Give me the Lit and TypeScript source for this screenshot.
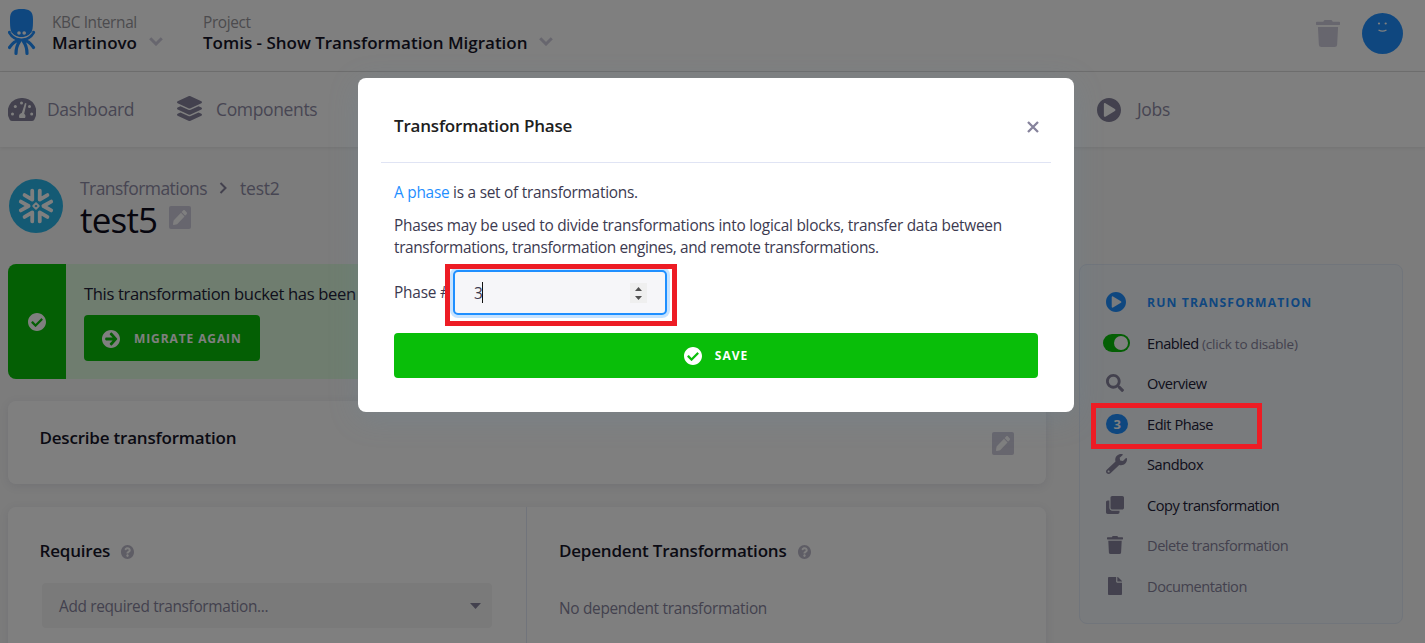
import { LitElement, html, svg, css } from "lit";
import { customElement, property, state } from "lit/decorators.js";

const CIRCLE = "M504 256c0 137-111 248-248 248S8 393 8 256 119 8 256 8s248 111 248 248z";

const ICONS: Record<string, { box: string; d: string }> = {
  check: {
    box: "8 8 496 496",
    d: "M504 256c0 136.967-111.033 248-248 248S8 392.967 8 256 119.033 8 256 8s248 111.033 248 248zM227.314 387.314l184-184c6.248-6.248 6.248-16.379 0-22.627l-22.627-22.627c-6.248-6.249-16.379-6.249-22.628 0L216 308.118l-70.059-70.059c-6.248-6.248-16.379-6.248-22.628 0l-22.627 22.627c-6.248 6.248-6.248 16.379 0 22.627l104 104c6.249 6.249 16.379 6.249 22.628.001z",
  },
  play: {
    box: "8 8 496 496",
    d: CIRCLE + "M150 136v240c0 18 16 27 32 19l196-118c16-9 16-32 0-42L182 117c-16-9-32 1-32 19z",
  },
  arrow: {
    box: "8 8 496 496",
    d: CIRCLE + "M227 138l75 78H120c-13 0-24 11-24 24v32c0 13 11 24 24 24h182l-75 78c-10 9-9 24 0 34l22 22c9 9 24 9 34 0l140-157c9-9 9-25 0-34L283 82c-9-9-25-9-34 0l-22 22c-9 10-9 25 0 34z",
  },
  search: {
    box: "0 0 512 512",
    d: "M505 442.7L405.3 343c-4.500-4.500-10.600-7-17-7H372c27.600-35.300 44-79.700 44-128C416 93.100 322.900 0 208 0S0 93.100 0 208s93.100 208 208 208c48.300 0 92.700-16.400 128-44v16.300c0 6.400 2.500 12.500 7 17l99.700 99.700c9.400 9.400 24.600 9.400 33.900 0l28.300-28.300c9.400-9.400 9.400-24.600.1-34zM208 336c-70.700 0-128-57.200-128-128 0-70.700 57.200-128 128-128 70.700 0 128 57.200 128 128 0 70.700-57.200 128-128 128z",
  },
  wrench: {
    box: "0 0 512 512",
    d: "M507.730 109.100c-2.240-9.030-13.540-12.090-20.120-5.510l-74.360 74.360-67.880-11.310-11.310-67.880 74.360-74.360c6.620-6.620 3.430-17.900-5.660-20.160-47.380-11.740-99.550.91-136.580 37.930-39.640 39.640-50.550 97.100-34.050 147.200L18.740 402.760c-24.990 24.990-24.990 65.510 0 90.500 24.990 24.990 65.510 24.990 90.500 0l213.210-213.210c50.120 16.710 107.470 5.680 147.370-34.220 37.070-37.070 49.700-89.320 37.910-136.730zM64 472c-13.250 0-24-10.750-24-24 0-13.260 10.750-24 24-24s24 10.740 24 24c0 13.250-10.750 24-24 24z",
  },
  clone: {
    box: "0 0 512 512",
    d: "M464 0c26.510 0 48 21.490 48 48v288c0 26.510-21.490 48-48 48H176c-26.510 0-48-21.490-48-48V48c0-26.510 21.490-48 48-48h288M176 416c-44.112 0-80-35.888-80-80V128H48c-26.510 0-48 21.490-48 48v288c0 26.510 21.490 48 48 48h288c26.510 0 48-21.490 48-48v-48H176z",
  },
  trash: {
    box: "0 0 448 512",
    d: "M432 32H312l-9.400-18.700A24 24 0 0 0 281.100 0H166.800a23.720 23.720 0 0 0-21.400 13.300L136 32H16A16 16 0 0 0 0 48v32a16 16 0 0 0 16 16h416a16 16 0 0 0 16-16V48a16 16 0 0 0-16-16zM36 132L53.200 467a48 48 0 0 0 47.900 45h245.800a48 48 0 0 0 47.900-45L412 132z",
  },
  file: {
    box: "0 0 384 512",
    d: "M224 136V0H24C10.700 0 0 10.700 0 24v464c0 13.300 10.700 24 24 24h336c13.300 0 24-10.700 24-24V160H248c-13.200 0-24-10.800-24-24zm160-14.100v6.100H256V0h6.100c6.400 0 12.500 2.500 17 7l97.900 98c4.500 4.500 7 10.600 7 16.900z",
  },
  question: {
    box: "8 8 496 496",
    d: "M504 256c0 136.997-111.043 248-248 248S8 392.997 8 256C8 119.083 119.043 8 256 8s248 111.083 248 248zM262.655 90c-54.497 0-89.255 22.957-116.549 63.758-3.536 5.286-2.353 12.415 2.715 16.258l34.699 26.310c5.205 3.947 12.621 3.008 16.665-2.122 17.864-22.658 30.113-35.797 57.303-35.797 20.429 0 45.698 13.148 45.698 32.958 0 14.976-12.363 22.667-32.534 33.976C247.128 238.528 216 254.941 216 296v4c0 6.627 5.373 12 12 12h56c6.627 0 12-5.373 12-12v-1.333c0-28.462 83.186-29.647 83.186-106.667 0-58.002-60.165-102-116.531-102zM256 338c-25.365 0-46 20.635-46 46 0 25.364 20.635 46 46 46s46-20.636 46-46c0-25.365-20.635-46-46-46z",
  },
  layers: {
    box: "0 0 512 512",
    d: "M12.410 148.020l232.940 105.670c6.800 3.090 14.490 3.090 21.290 0l232.940-105.670c16.550-7.510 16.550-32.520 0-40.030L266.650 2.310a25.607 25.607 0 0 0-21.290 0L12.410 107.980c-16.550 7.510-16.550 32.530 0 40.040zm487.180 88.280l-58.090-26.330-161.640 73.270c-7.560 3.430-15.590 5.170-23.860 5.170s-16.290-1.740-23.860-5.170L70.510 209.970l-58.100 26.330c-16.550 7.500-16.550 32.500 0 40l232.940 105.590c6.800 3.080 14.490 3.080 21.290 0L499.590 276.300c16.550-7.500 16.550-32.500 0-40zm0 127.800l-57.870-26.230-161.860 73.370c-7.560 3.430-15.590 5.170-23.860 5.170s-16.290-1.740-23.860-5.170L70.290 337.870 12.410 364.100c-16.550 7.500-16.550 32.500 0 40l232.940 105.590c6.800 3.080 14.490 3.080 21.290 0L499.590 404.100c16.550-7.500 16.550-32.500 0-40z",
  },
  pencil: {
    box: "0 0 512 512",
    d: "M497.900 142.100l-46.100 46.100c-4.700 4.700-12.300 4.700-17 0l-111-111c-4.700-4.700-4.700-12.300 0-17l46.100-46.100c18.700-18.700 49.100-18.700 67.900 0l60.100 60.100c18.800 18.700 18.800 49.100 0 67.900zM284.200 99.800L21.600 362.400.4 483.900c-2.900 16.400 11.400 30.600 27.800 27.800l121.500-21.300 262.600-262.600c4.700-4.700 4.700-12.300 0-17l-111-111c-4.800-4.700-12.400-4.700-17.100 0z",
  },
};

@customElement("ui-icon")
class UiIcon extends LitElement {
  @property() name = "check";
  static styles = css`
    :host { display: block; flex: none; }
    svg { display: block; width: 100%; height: 100%; fill: currentColor; }
  `;
  render() {
    const icon = ICONS[this.name];
    return html`<svg viewBox=${icon.box} preserveAspectRatio="none">
      <path fill-rule="evenodd" d=${icon.d}></path>
    </svg>`;
  }
}

@customElement("app-root")
class AppRoot extends LitElement {
  @state() private phase = 3;

  static styles = css`
    :host {
      display: block; position: relative; width: 1425px; height: 643px; overflow: hidden;
      background: #f8f8f8; color: #222138;
      font-family: "Open Sans", "Noto Sans", sans-serif; font-size: 15.4px;
      --blue: #1f8fff; --green: #09be09; --slate: #86839c; --mute: #8f8ca6;
    }
    * { box-sizing: border-box; }
    svg { display: block; flex: none; }
    p, h1, h2 { margin: 0; font-weight: 400; white-space: nowrap; }

    .top { display: flex; height: 72px; padding: 0 22px 0 8px; background: #fff; border-bottom: 1px solid #dfdfdf; }
    .logo { margin-top: 8px; margin-right: 16px; }
    .crumb { display: flex; padding-top: 13px; margin-right: 40px; }
    .crumb .label { height: 19px; line-height: 19px; color: #98979c; letter-spacing: -0.35px; }
    .crumb .value { height: 21px; line-height: 21px; font-size: 17px; font-weight: 600; color: #161528; }
    .crumb .org { width: 85px; }
    .crumb .project { letter-spacing: -0.01px; width: 324px; }
    .chev { margin: 24px 0 0 12px; }
    .tools { display: flex; margin-left: auto; }
    .bin { width: 24px; height: 27px; margin: 20px 22px 0 0; color: #cfccdc; }
    .avatar { margin-top: 13px; }

    .nav { display: grid; grid-template-columns: 169px 920px auto; height: 75px; padding-left: 8px; align-items: center; background: #fff; box-shadow: 0 1px 4px rgba(0, 0, 0, 0.08); position: relative; }
    .nav-item { display: flex; align-items: center; font-size: 17.5px; color: var(--mute); letter-spacing: -0.35px; height: 75px; }
    .nav-item span { line-height: 24px; margin-bottom: 2px; }
    .nav-item .ico { color: var(--slate); }
    .dash { margin-right: 11px; }
    .layers { width: 25px; height: 25px; margin-right: 14px; margin-bottom: 2px; }
    .jobs { width: 24px; height: 24px; margin-right: 16px; }

    .page { display: flex; align-items: flex-start; padding-left: 8px; }
    .main { width: 1038px; flex: none; }
    .title-row { display: flex; height: 117px; }
    .flake { margin: 32px 0 0 1px; }
    .titles { margin: 29px 0 0 17px; }
    .path { display: flex; height: 25px; line-height: 25px; font-size: 17.5px; color: var(--mute); letter-spacing: -0.2px; }
    .path .first { width: 127px; letter-spacing: -0.55px; }
    .path svg { margin: 6px 13px 0 12px; }
    .name { display: flex; height: 44px; }
    .name h1 { width: 77px; font-size: 35px; line-height: 38px; color: #0e0d1c; letter-spacing: -0.8px; }
    .edit { display: grid; place-items: center; width: 22px; height: 23px; border-radius: 2px; background: #cfccdc; color: #fff; flex: none; }
    .edit ui-icon { width: 14px; height: 15px; }
    .name .edit { margin: 5px 0 0 12px; }

    .alert { display: flex; height: 115px; border-radius: 8px; overflow: hidden; background: #dffbdf; }
    .alert .mark { display: grid; place-items: center; width: 58px; background: var(--green); color: #fff; }
    .mark ui-icon, .btn ui-icon { width: 18px; height: 18px; }
    .alert .body { padding: 18px 0 0 18px; }
    .alert p { line-height: 24px; font-size: 16.6px; height: 33px; letter-spacing: -0.36px; }
    .btn { display: flex; align-items: center; border: 0; border-radius: 4px; background: var(--green); color: #fff; font: 700 12px/20px "Open Sans", sans-serif; letter-spacing: 1.2px; white-space: nowrap; }
    .migrate { width: 176px; height: 46px; padding: 1px 18px 0; gap: 14px; letter-spacing: 0.9px; }

    .card { background: #fff; border-radius: 8px; box-shadow: 0 2px 10px rgba(60, 60, 110, 0.1); margin-top: 22px; }
    .describe { display: flex; justify-content: space-between; height: 83px; padding: 25px 32px 0 31.500px; }
    h2 { font-size: 17px; font-weight: 600; line-height: 24px; letter-spacing: -0.2px; color: #161528; }
    .describe .edit { margin-top: 6px; }
    .deps { display: grid; grid-template-columns: 519px 1fr; height: 160px; margin-top: 23px; }
    .requires { padding: 32px 34px 0 31.500px; border-right: 1px solid #e3e8f6; }
    .dependent { padding: 32px 0 0 32px; }
    .heading { display: flex; align-items: center; height: 24px; gap: 11px; }
    .heading ui-icon { width: 13px; height: 14px; color: #bdbaca; margin-top: 2px; }
    .select { display: flex; align-items: center; justify-content: space-between; width: 450px; height: 45px; margin: 20px 0 0 2.500px; padding: 1px 11px 0 17px; border-radius: 4px; background: #f5f5f5; color: var(--slate); letter-spacing: -0.34px; }
    .none { margin-top: 35px; line-height: 22px; color: var(--slate); letter-spacing: -0.3px; }

    .side { width: 324px; height: 360px; margin: 117px 0 0 33px; padding: 17px 0 0 23px; border: 1px solid #e2eaf6; border-radius: 8px; background: #f3f6fa; }
    .row { display: flex; align-items: center; height: 40.500px; font-size: 14.6px; letter-spacing: -0.46px; color: #222138; }
    .row .slot { display: flex; width: 44px; padding-left: 3px; color: var(--slate); }
    .row .run { color: var(--blue); font-size: 12.2px; font-weight: 700; letter-spacing: 1.1px; }
    .row .dim { color: var(--slate); }
    .row small { font-size: 13.500px; letter-spacing: -0.22px; color: var(--slate); }
    .i-run { width: 20px; height: 20px; color: var(--blue); }
    .i18 { width: 18px; height: 18px; }
    .i-wrench { width: 21px; height: 20px; }
    .i-trash { width: 16px; height: 18px; margin-left: 1px; }
    .i-file { width: 14px; height: 18px; margin-left: 2px; }
    .toggle { width: 27px; height: 18px; margin-left: -3px; border-radius: 9px; background: var(--green); padding: 2px; display: flex; justify-content: flex-end; }
    .toggle i { width: 14px; height: 14px; border-radius: 50%; background: #fff; }
    .badge { width: 22px; height: 20px; border-radius: 10px; background: var(--blue); color: #fff; font-size: 13px; font-weight: 700; line-height: 20px; text-align: center; }

    .shade { position: absolute; inset: 0; background: rgba(0, 0, 0, 0.5); }
    .modal { position: absolute; left: 358px; top: 78px; width: 716px; height: 334px; background: #fff; border-radius: 8px; box-shadow: 0 6px 30px rgba(100, 140, 170, 0.22); }
    .modal-head { display: flex; justify-content: space-between; height: 85px; margin: 0 23px; padding: 36px 12px 0 13px; border-bottom: 1px solid #e0e4f4; }
    .modal-head h2 { color: #202020; }
    .modal-head svg { margin-top: 6.500px; }
    .modal-body { padding: 19px 36px 0; color: #3c3a50; }
    .modal-body p { line-height: 22px; letter-spacing: -0.25px; }
    .modal-body a { color: var(--blue); }
    .modal-body p + p { margin-top: 11px; }
    .second { letter-spacing: -0.35px; }
    .field { display: flex; align-items: center; height: 45px; margin-top: 11px; letter-spacing: -0.2px; }
    .field label { width: 59px; white-space: nowrap; overflow: hidden; }
    .input { display: flex; align-items: center; width: 214px; height: 45px; padding: 0 18px 0 19px; border: 2px solid var(--blue); border-radius: 5px; background: #f6f6f9; box-shadow: 0 0 0 3px rgba(31, 143, 255, 0.25); }
    .input span { margin-top: 2px; letter-spacing: -1.2px; }
    .caret { width: 1px; height: 21px; background: #111; }
    .spin { margin-left: auto; }
    .save { width: 644px; height: 45px; margin-top: 18px; padding: 0 6px; justify-content: center; gap: 13px; letter-spacing: 1px; }
    .mark-box { position: absolute; border: 5px solid #ed1c24; }
    .mark-input { left: 445px; top: 264px; width: 232px; height: 62px; }
    .mark-menu { left: 1091px; top: 403px; width: 171px; height: 46px; }
  `;

  private chevron() {
    return html`<svg class="chev" width="14" height="9" viewBox="0 0 14 9" fill="none" stroke="#cfccdc" stroke-width="3"><path d="M1.200 1.200L7 7l5.800-5.800"></path></svg>`;
  }

  private flake() {
    return html`<svg class="flake" width="54" height="54" viewBox="-27 -27 54 54">
      <circle r="27" fill="#29b5e8"></circle>
      <g fill="none" stroke="#fff" stroke-width="3.800" stroke-linecap="round" stroke-linejoin="round">
        ${[0, 60, 120, 180, 240, 300].map(
          (a) => svg`<path transform="rotate(${a})" d="M15.200-4.400L7.400 0l7.800 4.400"></path>`
        )}
        <path stroke-width="1.800" d="M0-2.800L2.800 0 0 2.800-2.800 0z"></path>
      </g>
    </svg>`;
  }

  render() {
    return html`
      <header class="top">
        <svg class="logo" width="28" height="48" viewBox="8 8 28 48" fill="none">
          <path fill="#1f8fff" fill-rule="evenodd" d="M10 19C10 11 14 9 21.500 9S33 11 33 19c0 5 0 9-1 12-2 4-6 6-10.500 6S13 35 11 31c-1-3-1-7-1-12zM19 31.200a1.800 1.800 0 1 0 0 3.600 1.800 1.800 0 0 0 0-3.600zM24.200 31.200a1.800 1.800 0 1 0 0 3.600 1.800 1.800 0 0 0 0-3.600z"></path>
          <g stroke="#1f8fff" stroke-width="3.200" stroke-linecap="round">
            <path d="M9.500 32.500C12 37 17 40 21.500 40S31 37 33.500 32.500"></path>
            <path d="M18.500 40.500C14 41 12 44 9.500 47.500M19.500 41.500C17 45 16 49 16 53.500M23.500 41.500C26 45 27 49 27 53.500M24.500 40.500C29 41 31 44 33.500 47.500"></path>
          </g>
          <path stroke="#fff" stroke-width="1" d="M11 32.500C14 36.500 17.500 37.600 21.500 37.600S29 36.500 32 32.500"></path>
        </svg>
        <div class="crumb">
          <div><p class="label">KBC Internal</p><p class="value org">Martinovo</p></div>
          ${this.chevron()}
        </div>
        <div class="crumb">
          <div><p class="label">Project</p><p class="value project">Tomis - Show Transformation Migration</p></div>
          ${this.chevron()}
        </div>
        <div class="tools">
          <ui-icon class="bin" name="trash"></ui-icon>
          <svg class="avatar" width="41" height="41" viewBox="0 0 41 41">
            <circle cx="20.500" cy="20.500" r="20.500" fill="#1f8fff"></circle>
            <g fill="#fff"><circle cx="17" cy="10.500" r="1.100"></circle><circle cx="23.700" cy="10.500" r="1.100"></circle></g>
            <path d="M16.500 17q4 2.400 8 0" fill="none" stroke="#fff" stroke-width="1.300"></path>
          </svg>
        </div>
      </header>

      <nav class="nav">
        <div class="nav-item">
          <svg class="ico dash" width="28" height="23" viewBox="0 0 28 23" fill="currentColor">
            <path d="M14 0a14 14 0 0 0-13 20c.6 1.800 1.300 3 3 3h20c1.700 0 2.400-1.200 3-3A14 14 0 0 0 14 0z"></path>
            <g fill="#fff"><circle cx="4.500" cy="16" r="1.500"></circle><circle cx="7.300" cy="8.600" r="1.500"></circle><circle cx="13.500" cy="5" r="1.500"></circle><circle cx="21.500" cy="8.600" r="1.500"></circle><circle cx="23.700" cy="16" r="1.500"></circle><path d="M17 5l1.500.5-2.300 10.200c1.600 1 1.500 2.800.8 4.300h-5.500c-1-2 0-4.500 2.300-4.900z"></path></g>
          </svg>
          <span>Dashboard</span>
        </div>
        <div class="nav-item"><ui-icon class="ico layers" name="layers"></ui-icon><span>Components</span></div>
        <div class="nav-item"><ui-icon class="ico jobs" name="play"></ui-icon><span>Jobs</span></div>
      </nav>

      <div class="page">
        <main class="main">
          <div class="title-row">
            ${this.flake()}
            <div class="titles">
              <div class="path">
                <span class="first">Transformations</span>
                <svg width="8" height="12" viewBox="0 0 8 12" fill="none" stroke="#86839c" stroke-width="2"><path d="M1.500 1l5 5-5 5"></path></svg>
                <span>test2</span>
              </div>
              <div class="name"><h1>test5</h1><div class="edit"><ui-icon name="pencil"></ui-icon></div></div>
            </div>
          </div>
          <div class="alert">
            <div class="mark"><ui-icon name="check"></ui-icon></div>
            <div class="body">
              <p>This transformation bucket has been</p>
              <button class="btn migrate"><ui-icon name="arrow"></ui-icon>MIGRATE AGAIN</button>
            </div>
          </div>
          <section class="card describe"><h2>Describe transformation</h2><div class="edit"><ui-icon name="pencil"></ui-icon></div></section>
          <section class="card deps">
            <div class="requires">
              <div class="heading"><h2>Requires</h2><ui-icon name="question"></ui-icon></div>
              <div class="select"><span>Add required transformation...</span>
                <svg width="11" height="6" viewBox="0 0 11 6"><path fill="#86839c" d="M0 0h11L5.500 6z"></path></svg></div>
            </div>
            <div class="dependent">
              <div class="heading"><h2>Dependent Transformations</h2><ui-icon name="question"></ui-icon></div>
              <p class="none">No dependent transformation</p>
            </div>
          </section>
        </main>
        <aside class="side">
          <div class="row"><div class="slot"><ui-icon class="i-run" name="play"></ui-icon></div><span class="run">RUN TRANSFORMATION</span></div>
          <div class="row"><div class="slot"><div class="toggle"><i></i></div></div><span>Enabled <small>(click to disable)</small></span></div>
          <div class="row"><div class="slot"><ui-icon class="i18" name="search"></ui-icon></div><span>Overview</span></div>
          <div class="row"><div class="slot"><div class="badge">${this.phase}</div></div><span>Edit Phase</span></div>
          <div class="row"><div class="slot"><ui-icon class="i-wrench" name="wrench"></ui-icon></div><span>Sandbox</span></div>
          <div class="row"><div class="slot"><ui-icon class="i18" name="clone"></ui-icon></div><span>Copy transformation</span></div>
          <div class="row"><div class="slot"><ui-icon class="i-trash" name="trash"></ui-icon></div><span class="dim">Delete transformation</span></div>
          <div class="row"><div class="slot"><ui-icon class="i-file" name="file"></ui-icon></div><span class="dim">Documentation</span></div>
        </aside>
      </div>

      <div class="shade"></div>
      <div class="modal" role="dialog">
        <div class="modal-head">
          <h2>Transformation Phase</h2>
          <svg width="12" height="12" viewBox="0 0 12 12" fill="none" stroke="#86839c" stroke-width="2.300"><path d="M1 1l10 10M11 1L1 11"></path></svg>
        </div>
        <div class="modal-body">
          <p><a>A phase</a> is a set of transformations.</p>
          <p>Phases may be used to divide transformations into logical blocks, transfer data between<br /><span class="second">transformations, transformation engines, and remote transformations.</span></p>
          <div class="field">
            <label>Phase #</label>
            <div class="input"><span>${this.phase}</span><i class="caret"></i>
              <svg class="spin" width="17" height="20" viewBox="0 0 17 20"><path fill="#efefef" d="M0 0h17v20H0z"></path><path fill="#505050" d="M5 8l3.500-4L12 8zM5 13l3.500 4 3.500-4z"></path></svg>
            </div>
          </div>
          <button class="btn save"><ui-icon name="check"></ui-icon>SAVE</button>
        </div>
      </div>
      <div class="mark-box mark-input"></div>
      <div class="mark-box mark-menu"></div>
    `;
  }
}
